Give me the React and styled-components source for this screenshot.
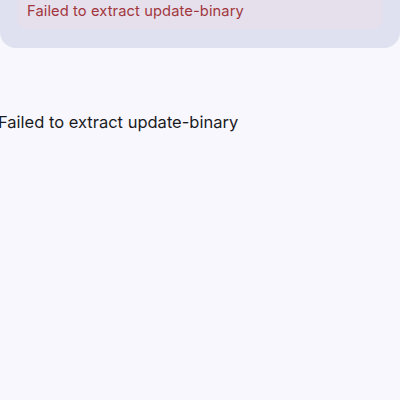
import React from "react";
import styled, { createGlobalStyle } from "styled-components";

const Global = createGlobalStyle`
  html, body { margin: 0; padding: 0; background: #f8f7fd; }
  body { font-family: "Inter", "Roboto", sans-serif; width: 400px; height: 400px; overflow: hidden; }
`;

const Page = styled.div`
  display: flex;
  flex-direction: column;
  width: 400px;
`;

const Card = styled.section`
  background: #dfe1f1;
  border-radius: 0 0 16px 16px;
  padding: 0 17px 19px;
`;

const ErrorBox = styled.div`
  background: #e6e0ec;
  border-radius: 0 0 10px 10px;
  padding: 0 10px;
  height: 29px;
  display: flex;
  align-items: flex-start;
`;

const ErrorText = styled.span`
  color: #a1363d;
  font-size: 14.7px;
  line-height: 22px;
  letter-spacing: 0.1px;
`;

const Message = styled.p`
  margin: 62px 0 0 -2px;
  color: #1b1b1f;
  font-size: 16.5px;
  line-height: 24px;
`;

export default function App() {
  return (
    <Page>
      <Global />
      <Card>
        <ErrorBox>
          <ErrorText>Failed to extract update-binary</ErrorText>
        </ErrorBox>
      </Card>
      <Message>Failed to extract update-binary</Message>
    </Page>
  );
}
